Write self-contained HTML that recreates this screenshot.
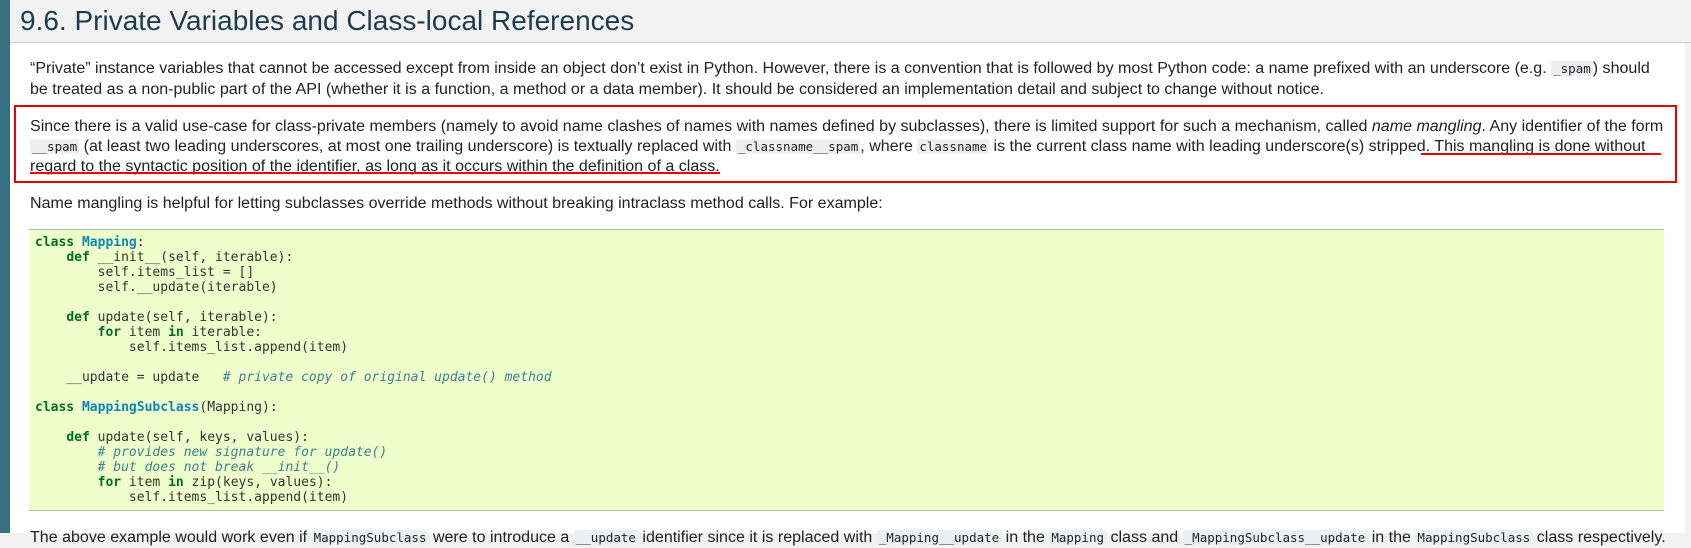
<!DOCTYPE html>
<html><head><meta charset="utf-8"><style>
body{margin:0;width:1691px;height:533px;overflow:hidden;background:#f2f2f2;font-family:"Liberation Sans",sans-serif;position:relative}
#bar{position:absolute;left:0;top:0;width:10px;height:533px;background:#356f80}
#hd{position:absolute;left:10px;top:0;width:1681px;height:42px;background:#f2f2f2;border-bottom:1px solid #ccc}
#hd h1{margin:0;position:absolute;left:10px;top:4px;font-weight:normal;font-size:28px;color:#1d3b4e;line-height:34px}
#main{position:absolute;left:10px;top:43px;width:1675px;height:490px;background:#fff}
.l{position:absolute;left:30px;font-size:16.05px;color:#222;white-space:nowrap;line-height:20px}
code{font-family:"DejaVu Sans Mono",monospace;font-size:12.5px;background:#ecf0f3;padding:0 2px}
#box{position:absolute;left:14px;top:105px;width:1659px;height:74px;border:2px solid #e00}
#ul{position:absolute;left:1421px;top:153px;width:240px;height:2px;background:#e00}
#ul2{position:absolute;left:30px;top:172px;width:690px;height:2px;background:#e00}
#code{position:absolute;left:29px;top:229px;width:1635px;height:280px;background:#eeffcc;border-top:1px solid #ac9;border-bottom:1px solid #ac9}
pre{margin:0;position:absolute;left:6px;top:5px;font-family:"DejaVu Sans Mono",monospace;font-size:13px;line-height:15px;color:#333}
.k{color:#007020;font-weight:bold}.n{color:#0e84b5;font-weight:bold}.c{color:#408090;font-style:italic}
</style></head><body>
<div id="bar"></div>
<div id="hd"><h1>9.6. Private Variables and Class-local References</h1></div>
<div id="main"></div>
<div class="l" style="top:58px">“Private” instance variables that cannot be accessed except from inside an object don’t exist in Python. However, there is a convention that is followed by most Python code: a name prefixed with an underscore (e.g. <code>_spam</code>) should</div>
<div class="l" style="top:79px">be treated as a non-public part of the API (whether it is a function, a method or a data member). It should be considered an implementation detail and subject to change without notice.</div>
<div id="box"></div>
<div class="l" style="top:116px">Since there is a valid use-case for class-private members (namely to avoid name clashes of names with names defined by subclasses), there is limited support for such a mechanism, called <i>name mangling</i>. Any identifier of the form</div>
<div class="l" style="top:136px"><code>__spam</code> (at least two leading underscores, at most one trailing underscore) is textually replaced with <code>_classname__spam</code>, where <code>classname</code> is the current class name with leading underscore(s) stripped. This mangling is done without</div>
<div class="l" style="top:156px">regard to the syntactic position of the identifier, as long as it occurs within the definition of a class.</div>
<div id="ul"></div><div id="ul2"></div>
<div class="l" style="top:193px">Name mangling is helpful for letting subclasses override methods without breaking intraclass method calls. For example:</div>
<div id="code"><pre><span class="k">class</span> <span class="n">Mapping</span>:
    <span class="k">def</span> __init__(self, iterable):
        self.items_list = []
        self.__update(iterable)

    <span class="k">def</span> update(self, iterable):
        <span class="k">for</span> item <span class="k">in</span> iterable:
            self.items_list.append(item)

    __update = update   <span class="c"># private copy of original update() method</span>

<span class="k">class</span> <span class="n">MappingSubclass</span>(Mapping):

    <span class="k">def</span> update(self, keys, values):
        <span class="c"># provides new signature for update()</span>
        <span class="c"># but does not break __init__()</span>
        <span class="k">for</span> item <span class="k">in</span> zip(keys, values):
            self.items_list.append(item)</pre></div>
<div class="l" style="top:527px">The above example would work even if <code>MappingSubclass</code> were to introduce a <code>__update</code> identifier since it is replaced with <code>_Mapping__update</code> in the <code>Mapping</code> class and <code>_MappingSubclass__update</code> in the <code>MappingSubclass</code> class respectively.</div>
</body></html>
